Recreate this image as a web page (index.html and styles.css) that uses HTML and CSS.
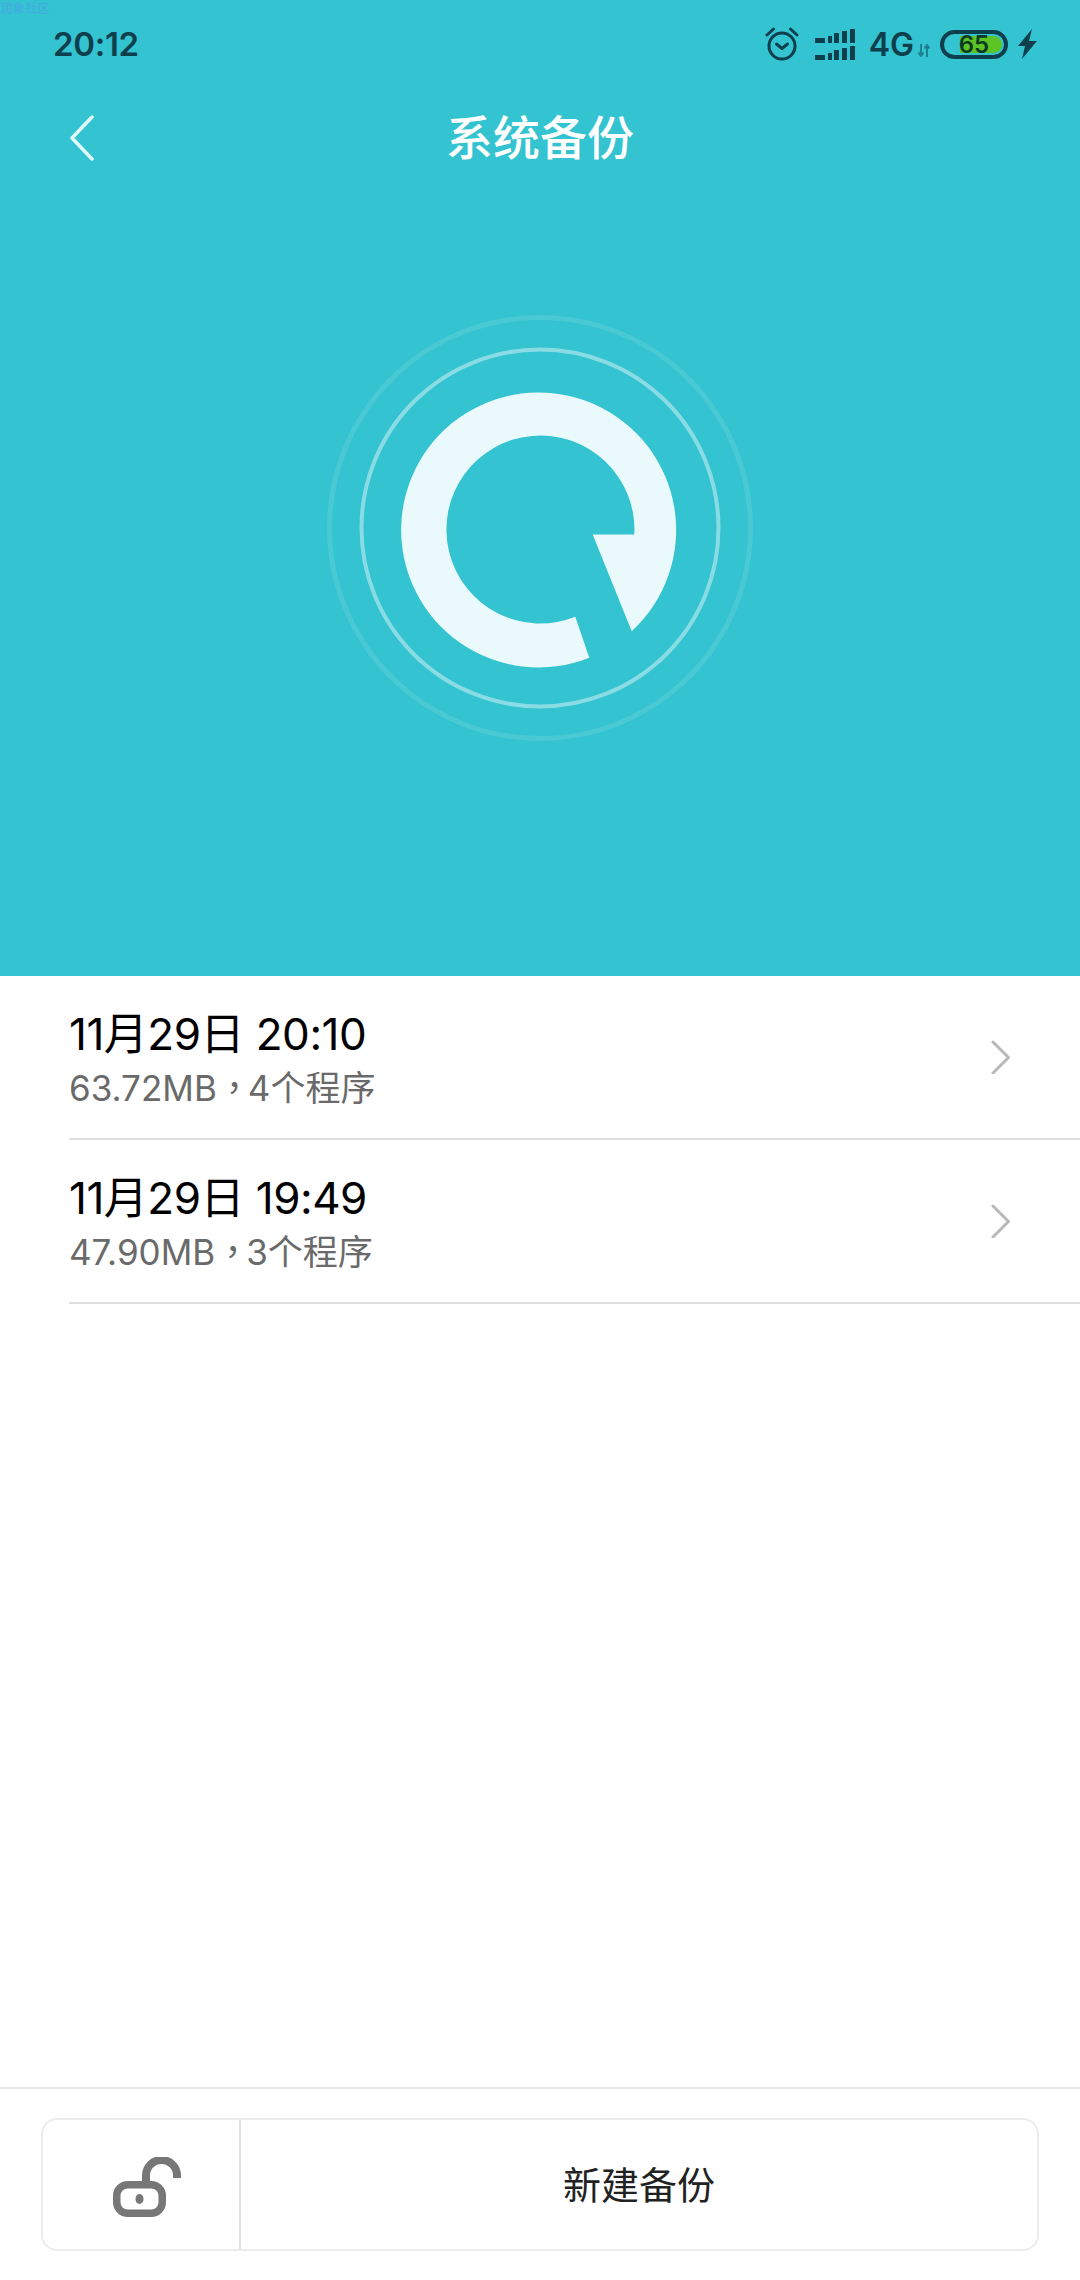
FILE: index.html
```html
<!DOCTYPE html>
<html lang="zh-CN">
<head>
<meta charset="utf-8">
<title>系统备份</title>
<link rel="stylesheet" href="styles.css">
</head>
<body>
<div class="page">
  <header class="hero">
    <div class="watermark">润象社区</div>
    <div class="status">
      <span class="time">20:12</span>
      <div class="status-icons">
        <svg class="alarm" width="34" height="34" viewBox="0 0 34 34" fill="none" stroke="#0e3f4d" stroke-width="3">
          <circle cx="17" cy="19" r="13"/>
          <path d="M11.500 17l5.500 4.500 5.500-4.500" stroke-linecap="round" stroke-linejoin="round"/>
          <path d="M2 8L8.500 2M32 8L25.500 2" stroke-linecap="round"/>
        </svg>
        <svg class="signal" width="40" height="31" viewBox="0 0 40 31" fill="#0e3f4d">
          <rect x="0" y="9" width="10" height="5"/><rect x="13" y="7" width="4" height="7"/><rect x="19" y="4" width="5" height="10"/><rect x="27" y="2" width="5" height="12"/><rect x="35" y="0" width="5" height="14"/>
          <rect x="0" y="26" width="10" height="5"/><rect x="13" y="24" width="4" height="7"/><rect x="19" y="21" width="5" height="10"/><rect x="27" y="19" width="5" height="12"/><rect x="35" y="17" width="5" height="14"/>
        </svg>
        <span class="net">4G</span>
        <svg class="arrows" width="12" height="13" viewBox="0 0 12 13" fill="none" stroke="#1f8090" stroke-width="2">
          <path d="M3 0v11M0.500 8.500L3 12l2.500-3.500M9 13V2M6.500 4.500L9 1l2.500 3.500"/>
        </svg>
        <div class="battery"><span class="battery-fill"></span><span class="battery-num">65</span></div>
        <svg class="bolt" width="19" height="30" viewBox="0 0 19 30" fill="#0e3f4d">
          <path d="M14 0L0 17h7L4 30 19 12h-8z"/>
        </svg>
      </div>
    </div>
    <div class="titlebar">
      <svg class="back" width="26" height="46" viewBox="0 0 26 46" fill="none" stroke="#e0fbfd" stroke-width="3.500" stroke-linecap="round" stroke-linejoin="round">
        <path d="M23 2L3 23l20 21"/>
      </svg>
      <h1 class="title">系统备份</h1>
    </div>
    <div class="logo-wrap">
      <svg class="logo" width="440" height="440" viewBox="0 0 440 440" fill="none">
        <circle cx="220" cy="220" r="210.500" stroke="#fff" stroke-opacity=".1" stroke-width="5"/>
        <circle cx="220" cy="220" r="178.500" stroke="#fff" stroke-opacity=".42" stroke-width="4"/>
        <path transform="translate(0.500 1)" fill="#eaf9fb" d="M313.800 225.500H272.200L311.200 322.200A137.500 137.500 0 1 0 268.800 348.800L254.800 307.800A94 94 0 1 1 313.800 225.500Z"/>
      </svg>
    </div>
  </header>
  <ul class="list">
    <li class="row">
      <div class="row-text">
        <div class="row-title">11月29日 20:10</div>
        <div class="row-sub">63.72MB<span class="comma" lang="zh-TW">，</span>4个程序</div>
      </div>
      <svg class="chev" width="20" height="34" viewBox="0 0 20 34" fill="none" stroke="#b9b9b9" stroke-width="3" stroke-linecap="round" stroke-linejoin="round"><path d="M2 2l15.500 15.500L2 33"/></svg>
    </li>
    <li class="row">
      <div class="row-text">
        <div class="row-title">11月29日 19:49</div>
        <div class="row-sub">47.90MB<span class="comma" lang="zh-TW">，</span>3个程序</div>
      </div>
      <svg class="chev" width="20" height="34" viewBox="0 0 20 34" fill="none" stroke="#b9b9b9" stroke-width="3" stroke-linecap="round" stroke-linejoin="round"><path d="M2 2l15.500 15.500L2 33"/></svg>
    </li>
  </ul>
  <footer class="footer">
    <div class="actions">
      <div class="lock-btn">
        <svg class="lock" width="68" height="60" viewBox="0 0 68 60" fill="none">
          <rect x="3.750" y="27.750" width="45.500" height="28.500" rx="11" stroke="#777" stroke-width="7.500"/>
          <ellipse cx="26.500" cy="42" rx="4" ry="5" fill="#777"/>
          <path d="M33 26V18.500a15.500 15.500 0 0 1 31 0V21" stroke="#777" stroke-width="8"/>
        </svg>
      </div>
      <div class="new-btn">新建备份</div>
    </div>
  </footer>
</div>
</body>
</html>
```

FILE: styles.css
```css
* { box-sizing: border-box; }
html, body { margin: 0; padding: 0; background: #fff; }
body { font-family: "Inter", "Noto Sans CJK SC", sans-serif; }
.page { width: 1080px; height: 2280px; display: flex; flex-direction: column; overflow: hidden; }

.hero { position: relative; height: 976px; background: #34c3d0; display: flex; flex-direction: column; }
.watermark { position: absolute; left: 0; top: 1px; font-size: 12.500px; line-height: 14px; color: #45a8e6; font-family: "Noto Sans CJK SC", sans-serif; }

.status { height: 88px; padding: 0 43px 0 53px; display: flex; align-items: center; justify-content: space-between; }
.time { font-family: "Inter", sans-serif; font-size: 33px; font-weight: 600; letter-spacing: -0.300px; color: #0e3f4d; }
.status-icons { display: flex; align-items: center; }
.alarm { margin-right: 16px; }
.signal { margin-right: 14px; }
.net { font-family: "Inter", sans-serif; font-size: 32px; font-weight: 600; color: #0e3f4d; margin-right: 4px; }
.arrows { margin: 13px 10px 0 0; }
.battery { position: relative; width: 68px; height: 29px; border: 4px solid #0e3f4d; border-radius: 15px; display: flex; align-items: center; justify-content: center; margin-right: 10px; }
.battery-fill { position: absolute; left: 16px; top: 2px; bottom: 2px; right: 2px; background: #5cc424; border-radius: 0 10px 10px 0; }
.battery-num { position: relative; font-family: "Inter", sans-serif; font-size: 24px; font-weight: 600; color: #0b3a22; }

.titlebar { position: relative; height: 100px; display: flex; align-items: center; justify-content: center; padding-bottom: 8px; }
.back { position: absolute; left: 69px; top: 27px; }
.title { margin: 0; font-family: "Noto Sans CJK SC", sans-serif; font-size: 47px; font-weight: 500; color: #fff; }

.logo-wrap { display: flex; justify-content: center; padding-top: 120px; }

.list { list-style: none; margin: 0; padding: 0 0 0 69px; }
.row { height: 164px; padding: 32px 48px 0 0; border-bottom: 2px solid #dedede; display: flex; justify-content: space-between; }
.row-text { display: flex; flex-direction: column; }
.row-title { font-size: 44px; line-height: 52px; letter-spacing: -0.500px; color: #000; }
.row-sub { margin-top: 4px; font-size: 35px; line-height: 44px; color: #6a6a6a; }
.comma { font-family: "Noto Sans CJK TC", sans-serif; margin-right: -4px; }
.chev { margin-top: 32px; margin-right: 21px; }

.footer { margin-top: auto; height: 193px; border-top: 2px solid #eaeaea; padding: 29px 41px 0; }
.actions { width: 998px; height: 133px; border: 2px solid #ececec; border-radius: 16px; display: flex; }
.lock-btn { width: 198px; border-right: 2px solid #e2e2e2; display: flex; align-items: center; justify-content: center; }
.lock { margin: 5px 0 0 12px; }
.new-btn { flex: 1; display: flex; align-items: center; justify-content: center; padding-bottom: 5px; font-family: "Noto Sans CJK SC", sans-serif; font-size: 38px; color: #222; }
```
